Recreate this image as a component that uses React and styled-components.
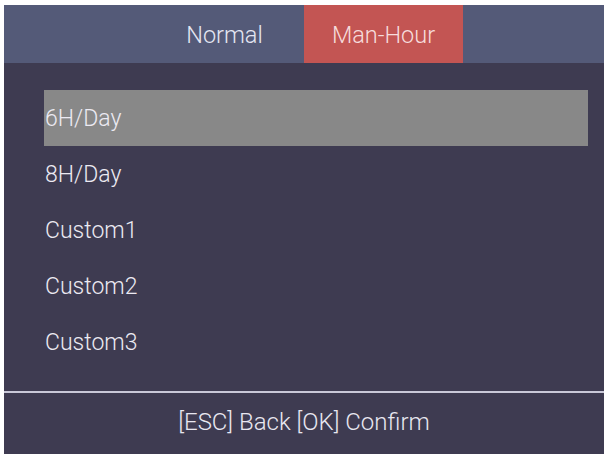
import React, { useState } from "react";
import styled, { createGlobalStyle } from "styled-components";

const GlobalStyle = createGlobalStyle`
  html, body {
    margin: 0;
    padding: 0;
    background: #ffffff;
  }
  body {
    font-family: Roboto, "Liberation Sans", Arial, sans-serif;
  }
`;

const Screen = styled.div`
  margin: 5px 0 0 4px;
  width: 600px;
  height: 449px;
  background: #3e3b51;
  display: flex;
  flex-direction: column;
  overflow: hidden;
`;

const Header = styled.div`
  height: 58px;
  flex: none;
  background: #545a78;
  display: flex;
  justify-content: center;
`;

const Tab = styled.div`
  width: 159px;
  display: flex;
  align-items: center;
  justify-content: center;
  padding-top: 2px;
  box-sizing: border-box;
  font-size: 23.5px;
  font-weight: 300;
  color: ${(p) => (p.$active ? "#f6dcdc" : "#e4e6f2")};
  background: ${(p) => (p.$active ? "#c35553" : "transparent")};
`;

const List = styled.ul`
  list-style: none;
  margin: 0;
  padding: 27px 16px 0 40px;
  flex: 1;
  display: flex;
  flex-direction: column;
`;

const Row = styled.li`
  height: 56px;
  display: flex;
  align-items: center;
  padding-left: 1px;
  font-size: 23px;
  font-weight: 300;
  color: #eceaf2;
  background: ${(p) => (p.$selected ? "#888888" : "transparent")};
`;

const Divider = styled.div`
  height: 2px;
  flex: none;
  background: #c9c8d8;
`;

const Footer = styled.div`
  height: 61px;
  flex: none;
  display: flex;
  align-items: center;
  justify-content: center;
  padding-bottom: 4px;
  box-sizing: border-box;
  font-size: 24px;
  font-weight: 300;
  color: #e8e7f0;
`;

const items = ["6H/Day", "8H/Day", "Custom1", "Custom2", "Custom3"];

export default function App() {
  const [selected] = useState(0);
  return (
    <>
      <GlobalStyle />
      <Screen>
        <Header>
          <Tab>Normal</Tab>
          <Tab $active>Man-Hour</Tab>
        </Header>
        <List>
          {items.map((label, i) => (
            <Row key={label} $selected={i === selected}>
              {label}
            </Row>
          ))}
        </List>
        <Divider />
        <Footer>[ESC] Back [OK] Confirm</Footer>
      </Screen>
    </>
  );
}
